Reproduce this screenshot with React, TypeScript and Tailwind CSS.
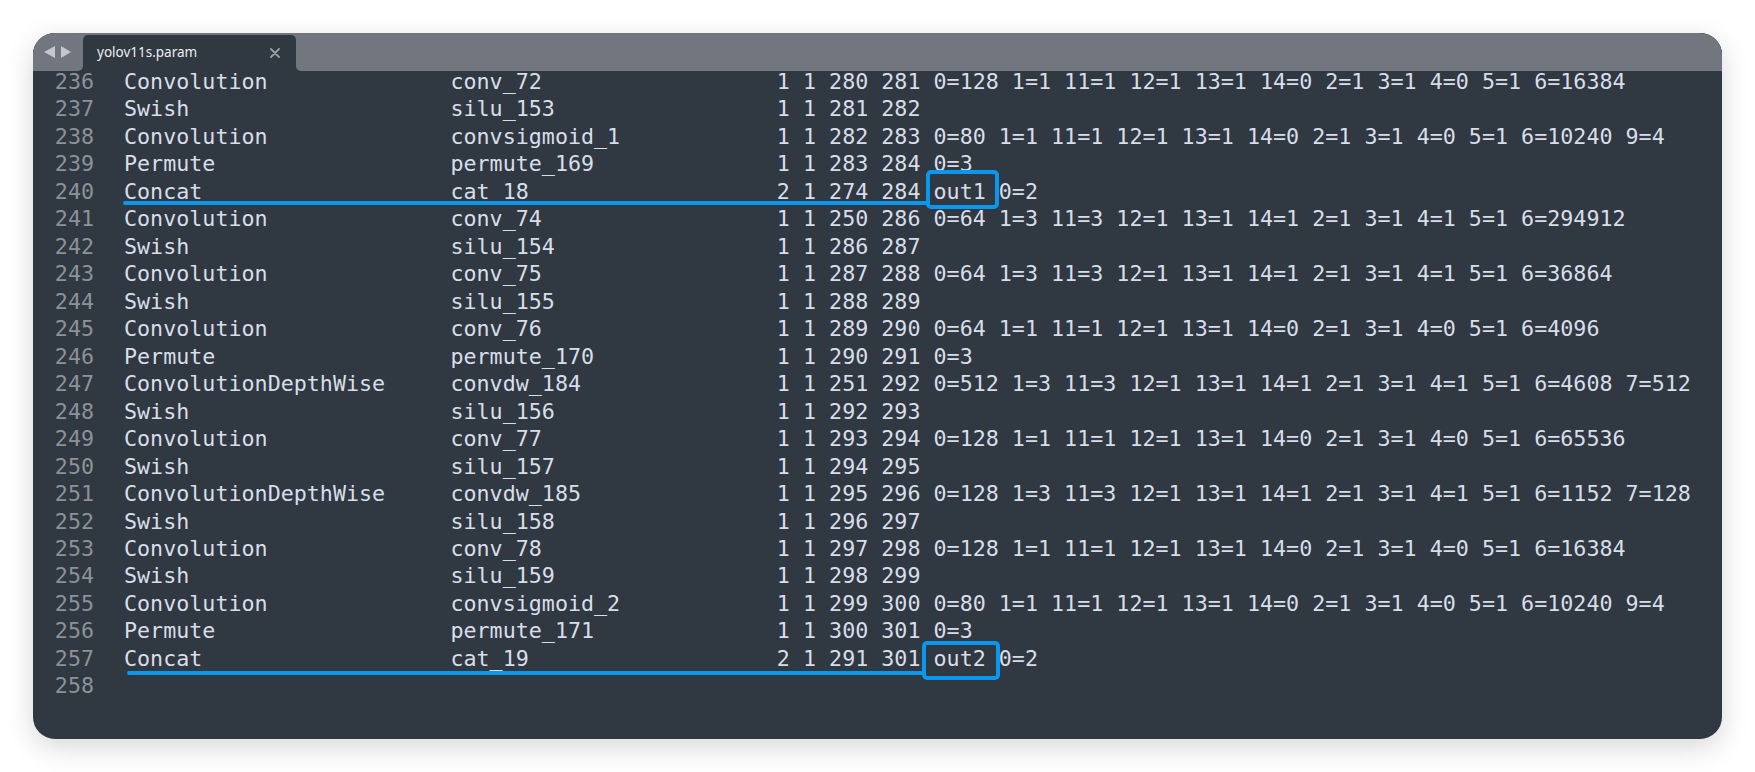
import React from "react";

const rows: [string, string, string][] = [
  ["Convolution", "conv_72", "1 1 280 281 0=128 1=1 11=1 12=1 13=1 14=0 2=1 3=1 4=0 5=1 6=16384"],
  ["Swish", "silu_153", "1 1 281 282"],
  ["Convolution", "convsigmoid_1", "1 1 282 283 0=80 1=1 11=1 12=1 13=1 14=0 2=1 3=1 4=0 5=1 6=10240 9=4"],
  ["Permute", "permute_169", "1 1 283 284 0=3"],
  ["Concat", "cat_18", "2 1 274 284 out1 0=2"],
  ["Convolution", "conv_74", "1 1 250 286 0=64 1=3 11=3 12=1 13=1 14=1 2=1 3=1 4=1 5=1 6=294912"],
  ["Swish", "silu_154", "1 1 286 287"],
  ["Convolution", "conv_75", "1 1 287 288 0=64 1=3 11=3 12=1 13=1 14=1 2=1 3=1 4=1 5=1 6=36864"],
  ["Swish", "silu_155", "1 1 288 289"],
  ["Convolution", "conv_76", "1 1 289 290 0=64 1=1 11=1 12=1 13=1 14=0 2=1 3=1 4=0 5=1 6=4096"],
  ["Permute", "permute_170", "1 1 290 291 0=3"],
  ["ConvolutionDepthWise", "convdw_184", "1 1 251 292 0=512 1=3 11=3 12=1 13=1 14=1 2=1 3=1 4=1 5=1 6=4608 7=512"],
  ["Swish", "silu_156", "1 1 292 293"],
  ["Convolution", "conv_77", "1 1 293 294 0=128 1=1 11=1 12=1 13=1 14=0 2=1 3=1 4=0 5=1 6=65536"],
  ["Swish", "silu_157", "1 1 294 295"],
  ["ConvolutionDepthWise", "convdw_185", "1 1 295 296 0=128 1=3 11=3 12=1 13=1 14=1 2=1 3=1 4=1 5=1 6=1152 7=128"],
  ["Swish", "silu_158", "1 1 296 297"],
  ["Convolution", "conv_78", "1 1 297 298 0=128 1=1 11=1 12=1 13=1 14=0 2=1 3=1 4=0 5=1 6=16384"],
  ["Swish", "silu_159", "1 1 298 299"],
  ["Convolution", "convsigmoid_2", "1 1 299 300 0=80 1=1 11=1 12=1 13=1 14=0 2=1 3=1 4=0 5=1 6=10240 9=4"],
  ["Permute", "permute_171", "1 1 300 301 0=3"],
  ["Concat", "cat_19", "2 1 291 301 out2 0=2"],
];

export default function App() {
  const lines = rows.map(([a, b, c]) => a.padEnd(24) + " " + b.padEnd(24) + " " + c);
  lines.push("");
  return (
    <div className="w-[1755px] h-[772px] bg-white p-[33px]">
      <div className="relative h-full rounded-[22px] overflow-hidden bg-[#303841] shadow-[0_8px_28px_rgba(0,0,0,0.16)] flex flex-col">
        {/* Tab bar */}
        <div className="flex h-[38px] shrink-0 bg-[#303841]">
          <div className="w-[50px] bg-[#72767e] rounded-br-[5px] flex items-center pl-[11px] gap-[6px]">
            <svg width="11" height="12" viewBox="0 0 11 12">
              <polygon points="11,0 11,12 0,6" fill="#c4c7cc" />
            </svg>
            <svg width="10" height="12" viewBox="0 0 10 12">
              <polygon points="0,0 0,12 10,6" fill="#c4c7cc" />
            </svg>
          </div>
          <div className="bg-[#72767e]">
            <div className="mt-[2px] h-[36px] w-[213px] bg-[#303841] rounded-t-[5px] flex items-center pl-[14px] pr-[15px] justify-between">
              <span className="text-[13.5px] text-[#eceef0] font-['Noto_Sans',sans-serif] -mt-[1px]">yolov11s.param</span>
              <svg width="10" height="10" viewBox="0 0 10 10" className="mr-[1px]">
                <path d="M1 1 L9 9 M9 1 L1 9" stroke="#9a9ea5" strokeWidth="1.8" strokeLinecap="round" />
              </svg>
            </div>
          </div>
          <div className="flex-1 bg-[#72767e] rounded-bl-[5px]" />
        </div>
        {/* Code area */}
        <div className="relative flex-1">
          <div className="font-['DejaVu_Sans_Mono',monospace] text-[21.7px] leading-[21px]">
            {lines.map((l, i) => (
              <div key={i} className="flex h-[27.47px] items-start">
                <div className="w-[61px] shrink-0 text-right text-[#8c9298]">{236 + i}</div>
                <div className="pl-[30px] whitespace-pre text-[#d8dee9]">{l}</div>
              </div>
            ))}
          </div>
          {/* annotations */}
          <div className="absolute left-[90px] top-[130px] w-[805px] h-[4px] rounded-full bg-[#0a97ee]" />
          <div className="absolute left-[893px] top-[99px] w-[73px] h-[39px] border-[4px] border-[#0a97ee] rounded-[5px]" />
          <div className="absolute left-[94px] top-[600px] w-[797px] h-[4px] rounded-full bg-[#0a97ee]" />
          <div className="absolute left-[889px] top-[570px] w-[78px] h-[39px] border-[4px] border-[#0a97ee] rounded-[5px]" />
        </div>
      </div>
    </div>
  );
}
